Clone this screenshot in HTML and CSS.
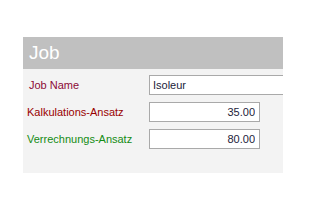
FILE: index.html
```html
<!DOCTYPE html>
<html>
<head>
<meta charset="utf-8">
<link rel="stylesheet" href="styles.css">
</head>
<body>
<div class="panel">
  <div class="header">Job</div>
  <div class="form">
    <label class="lbl lbl-name">Job Name</label>
    <input class="field field-wide" type="text" value="Isoleur">
    <label class="lbl lbl-calc">Kalkulations-Ansatz</label>
    <input class="field field-num" type="text" value="35.00">
    <label class="lbl lbl-bill">Verrechnungs-Ansatz</label>
    <input class="field field-num" type="text" value="80.00">
  </div>
</div>
</body>
</html>
```
FILE: styles.css
```css
html, body {
  margin: 0;
  padding: 0;
  background: #ffffff;
}
body {
  font-family: Tahoma, "Liberation Sans", "DejaVu Sans", sans-serif;
}
.panel {
  margin: 37px 0 0 23px;
  width: 260px;
  height: 136px;
  background: #f3f3f3;
  overflow: hidden;
}
.header {
  height: 32px;
  background: #c0c0c0;
  color: #ffffff;
  font-size: 19px;
  line-height: 32px;
  padding-left: 6px;
  box-sizing: border-box;
}
.form {
  display: grid;
  grid-template-columns: 122px auto;
  row-gap: 7px;
  padding: 6px 0 0 4px;
  align-items: center;
}
.lbl {
  font-size: 11px;
  white-space: nowrap;
}
.lbl-name {
  color: #8c0a36;
  padding-left: 2px;
}
.lbl-calc {
  color: #990000;
}
.lbl-bill {
  color: #138c13;
}
.field {
  box-sizing: border-box;
  height: 20px;
  margin: 0;
  border: 1px solid #a9a9a9;
  background: #ffffff;
  font-family: Tahoma, "Liberation Sans", "DejaVu Sans", sans-serif;
  font-size: 11px;
  color: #1c1c3a;
  padding: 0 4px 0 3px;
  outline: none;
}
.field-wide {
  width: 150px;
}
.field-num {
  width: 111px;
  text-align: right;
}
```
